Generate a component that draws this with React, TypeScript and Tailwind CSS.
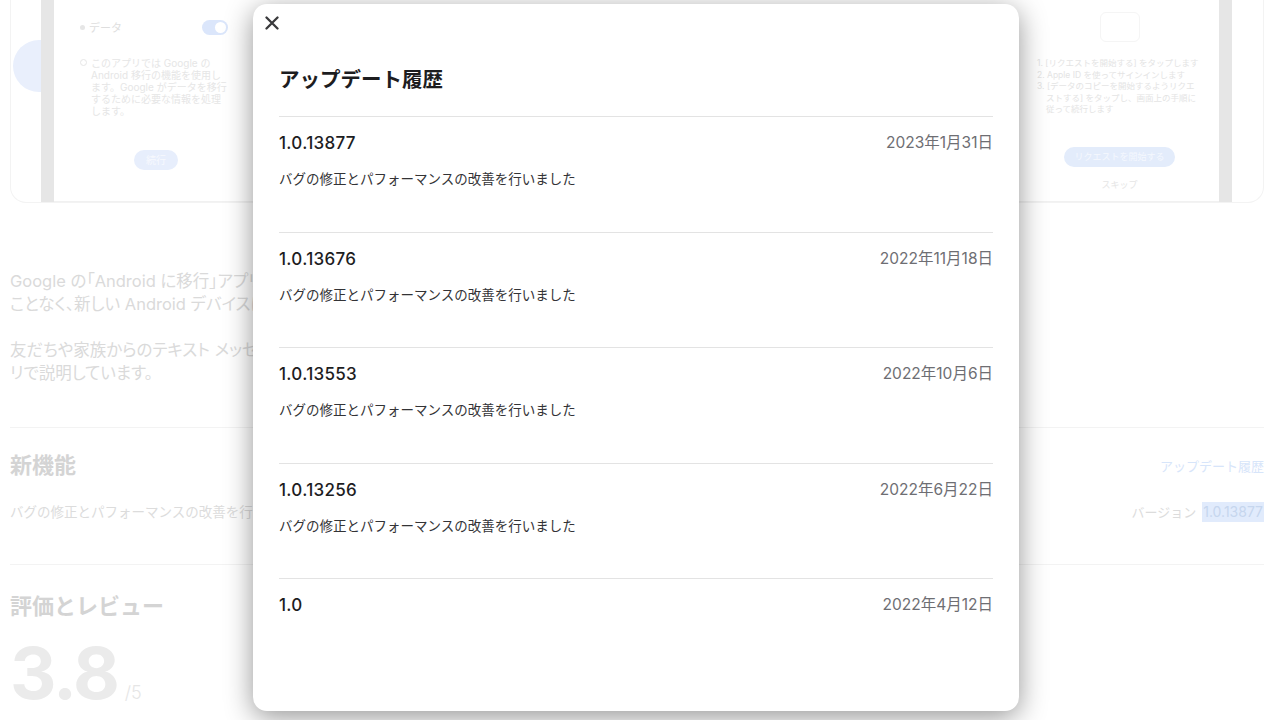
import React from 'react';

type Release = {
  version: string;
  date: string;
  note?: string;
};

const releases: Release[] = [
  { version: '1.0.13877', date: '2023年1月31日', note: 'バグの修正とパフォーマンスの改善を行いました' },
  { version: '1.0.13676', date: '2022年11月18日', note: 'バグの修正とパフォーマンスの改善を行いました' },
  { version: '1.0.13553', date: '2022年10月6日', note: 'バグの修正とパフォーマンスの改善を行いました' },
  { version: '1.0.13256', date: '2022年6月22日', note: 'バグの修正とパフォーマンスの改善を行いました' },
  { version: '1.0', date: '2022年4月12日' },
];

const CloseIcon: React.FC = () => (
  <svg width="14" height="14" viewBox="0 0 14 14" fill="none">
    <path d="M1.5 1.5 L12.5 12.5 M12.5 1.5 L1.5 12.5" stroke="#3a3a3c" strokeWidth="2.3" strokeLinecap="round" />
  </svg>
);

// faded page that sits behind the dialog (only what shows beside the dialog is written out)
const BackgroundPage: React.FC = () => (
  <div className="pl-[10px] pr-[16px]">
    {/* Screenshot strip */}
    <div className="flex h-[203px] rounded-b-[16px] border border-t-0 border-[#f3f3f3] overflow-hidden">
      <div className="relative w-[30px] shrink-0 overflow-hidden">
        <div className="absolute left-[2px] top-[40px] h-[52px] w-[52px] rounded-full bg-[#e9effc]" />
      </div>
      <div className="w-[13px] shrink-0 bg-[#e6e6e6]" />
      <div className="flex w-[1165px] shrink-0 justify-between border-b border-[#f1f1f1]">
        {/* left screen */}
        <div className="flex w-[200px] flex-col px-[26px] pt-[20px] text-[10px] leading-[12px] text-[#e6e6e6]">
          <div className="flex items-center justify-between">
            <div className="flex items-center gap-[4px]">
              <span className="h-[5px] w-[5px] rounded-full bg-[#e6e6e6]" />
              <span className="text-[11px] text-[#dedede]">データ</span>
            </div>
            <div className="flex h-[15px] w-[26px] items-center justify-end rounded-full bg-[#dbe6fb] px-[2px]">
              <span className="h-[11px] w-[11px] rounded-full bg-white" />
            </div>
          </div>
          <div className="mt-[22px] flex gap-[4px]">
            <span className="mt-[2px] h-[7px] w-[7px] shrink-0 rounded-full border border-[#e6e6e6]" />
            <p>このアプリでは Google の Android 移行の機能を使用します。Google がデータを移行するために必要な情報を処理します。</p>
          </div>
          <div className="mt-[33px] flex justify-center pl-[4px]">
            <span className="rounded-full bg-[#e7eefc] px-[12px] py-[4px] text-[10px] text-[#f7f9fe]">続行</span>
          </div>
        </div>
        {/* right screen */}
        <div className="flex w-[199px] flex-col px-[17px] pt-[12px] text-[8.5px] leading-[11.5px] text-[#e4e4e4]">
          <div className="mx-auto h-[30px] w-[40px] rounded-[6px] border border-[#f5f5f5]" />
          <ol className="mt-[16px]">
            <li className="whitespace-nowrap">1. [リクエストを開始する] をタップします</li>
            <li className="whitespace-nowrap">2. Apple ID を使ってサインインします</li>
            <li className="pl-[9px] -indent-[9px]">3. [データのコピーを開始するようリクエストする] をタップし、画面上の手順に従って続行します</li>
          </ol>
          <div className="mt-[31px] flex justify-center">
            <span className="rounded-full bg-[#e3ecfb] px-[10px] py-[4px] text-[9px] leading-[12px] text-[#f5f8fe]">リクエストを開始する</span>
          </div>
          <div className="mt-[12px] text-center text-[9px] text-[#e6e6e6]">スキップ</div>
        </div>
      </div>
      <div className="w-[13px] shrink-0 bg-[#e6e6e6]" />
      <div className="flex-1" />
    </div>

    {/* Description */}
    <div className="whitespace-nowrap pt-[67px] text-[16.5px] leading-[23px] text-[#dadada] [font-feature-settings:'palt']">
      <p>Google の「Android に移行」アプリを</p>
      <p>ことなく、新しい Android デバイスにす</p>
      <p className="mt-[23px]">友だちや家族からのテキスト メッセージ</p>
      <p>リで説明しています。</p>
    </div>

    {/* What's new */}
    <div className="mt-[42px] border-t border-[#f3f3f3] pt-[23px]">
      <div className="flex items-center justify-between">
        <h2 className="text-[22px] font-bold leading-[28px] text-[#d4d4d4]">新機能</h2>
        <span className="mt-[4px] text-[13px] text-[#d7e5fa]">アップデート履歴</span>
      </div>
      <div className="mt-[23px] flex items-center justify-between text-[13.5px] leading-[20px] text-[#dcdcdc]">
        <p className="whitespace-nowrap">バグの修正とパフォーマンスの改善を行</p>
        <p className="flex items-center gap-[6px]">
          <span className="text-[13px]">バージョン</span>
          <span className="bg-[#e1ebfc] px-[1px] text-[14px] text-[#c6d6ee]">1.0.13877</span>
        </p>
      </div>
    </div>

    {/* Ratings */}
    <div className="mt-[42px] border-t border-[#f3f3f3] pt-[27px]">
      <h2 className="text-[22px] font-bold leading-[28px] text-[#d4d4d4]">評価とレビュー</h2>
      <div className="mt-[17px] flex items-baseline">
        <span className="text-[72px] font-bold leading-[72px] tracking-[-2px] text-[#ebebeb]">3.8</span>
        <span className="ml-[7px] text-[18px] font-light text-[#e6e6e6]">/5</span>
      </div>
    </div>
  </div>
);

const App: React.FC = () => {
  return (
    <div className="relative h-[720px] w-full overflow-hidden bg-white font-[Inter,'Noto_Sans_CJK_JP',sans-serif]">
      <BackgroundPage />

      {/* Update history dialog */}
      <div className="absolute left-[253px] top-[4px] flex h-[707px] w-[766px] flex-col rounded-[14px] bg-white shadow-[0_6px_28px_rgba(0,0,0,0.42)]">
        <div className="pl-[12px] pt-[12px]">
          <button className="flex h-[14px] w-[14px] items-center justify-center">
            <CloseIcon />
          </button>
        </div>
        <div className="px-[26px]">
          <h1 className="mt-[36px] text-[20.5px] font-bold leading-[28px] text-[#1d1d1f]">アップデート履歴</h1>
          <ul className="mt-[22px]">
            {releases.map(r => (
              <li key={r.version} className="border-t border-[#e3e3e3] pb-[43.6px] pt-[16px]">
                <div className="flex items-center justify-between">
                  <span className="text-[17px] font-medium leading-[20px] tracking-[0.3px] text-[#1d1d1f]">{r.version}</span>
                  <span className="text-[15.5px] leading-[20px] text-[#6e6e73]">{r.date}</span>
                </div>
                {r.note && (
                  <p className="mt-[17px] text-[13.5px] leading-[18px] text-[#333336]">{r.note}</p>
                )}
              </li>
            ))}
          </ul>
        </div>
      </div>
    </div>
  );
};

export default App;
